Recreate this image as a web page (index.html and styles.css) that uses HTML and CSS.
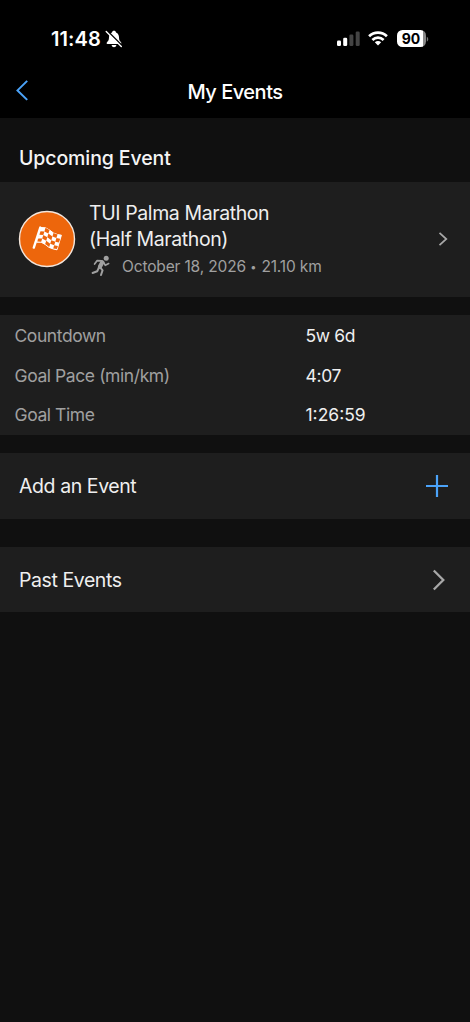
FILE: index.html
```html
<!DOCTYPE html>
<html lang="en">
<head>
<meta charset="utf-8">
<title>My Events</title>
<link rel="stylesheet" href="styles.css">
</head>
<body>
<header class="top">
  <div class="status">
    <span class="clock">11:48</span>
    <svg class="bell" width="18" height="18" viewBox="0 0 18 18">
      <path d="M9 .8C7.9.8 7.1 1.500 7 2.400 4.800 3.200 4.100 5 4 7.200 3.900 10 3.500 10.600 2.200 12 1.200 13.200 1.500 14 2.600 14H15.400C16.500 14 16.800 13.200 15.800 12 14.500 10.600 14.100 10 14 7.200 13.900 5 13.200 3.200 11 2.400 10.900 1.500 10.100.8 9 .8ZM6.600 15H11.400C11.100 16.500 10.200 17.200 9 17.200S6.900 16.500 6.600 15Z" fill="#fff"/>
      <path d="M2.200.8 17.300 15.900" stroke="#000" stroke-width="1.600"/>
      <path d="M1.200 1.500 16.300 16.600" stroke="#fff" stroke-width="1.400" stroke-linecap="round"/>
    </svg>
    <svg class="signal" width="24" height="16" viewBox="0 0 24 16">
      <g fill="#fff"><rect x="0" y="9.500" width="4" height="5.500" rx="1.300"/><rect x="6.200" y="6.800" width="4" height="8.200" rx="1.300"/></g>
      <g fill="#444"><rect x="12.400" y="3.500" width="4" height="11.500" rx="1.300"/><rect x="18.700" y=".5" width="4" height="14.500" rx="1.300"/></g>
    </svg>
    <svg class="wifi" width="20" height="15" viewBox="0 0 20 15">
      <g fill="none" stroke="#fff" stroke-width="2.700"><path d="M1.100 5.300C6.100.4 13.900.4 18.900 5.300"/><path d="M4.400 8.900C7.600 5.900 12.400 5.900 15.600 8.900"/></g>
      <path d="M6.800 11.300C8.600 9.700 11.400 9.700 13.200 11.300L10 14.600Z" fill="#fff"/>
    </svg>
    <div class="battery"><span class="level">90</span></div>
    <svg width="3" height="16" viewBox="0 0 3 16"><path d="M.8 5.700C2.700 6.400 2.700 9.800.8 10.500Z" fill="#777"/></svg>
  </div>
  <nav class="nav">
    <svg class="back" width="14" height="22" viewBox="0 0 14 22"><path d="M12.200 1.900 2.500 11.400l9.700 9.500" fill="none" stroke="#4ba3f9" stroke-width="2"/></svg>
    <h1 class="title">My Events</h1>
  </nav>
</header>
<main>
  <h2 class="heading">Upcoming Event</h2>
  <section class="panel event">
    <svg class="badge" width="58" height="58" viewBox="0 0 58 58">
      <circle cx="29" cy="29" r="27.500" fill="#ed660c" stroke="#f3e6dc" stroke-width="1.400"/>
      <g transform="translate(-.5 0)">
        <path d="M23.300 17.500 28 17.800 32 20 36 23 40 24.500 43.900 25.200 39.500 39.800 35.600 38.900 31.600 37.400 27.600 34.400 23.600 32.200 19 32.200" fill="#fff" stroke="#fff" stroke-width="1"/>
        <path d="M22.800 17.600 16.300 37.600" stroke="#fff" stroke-width="2.400" stroke-linecap="round"/>
        <g fill="#ed660c">
          <path d="M28 17.800l4 2.200-1.100 3.600-4-2.200Z"/>
          <path d="M36 23l4 1.500-1.100 3.600-4-1.500Z"/>
          <path d="M23 21.200l3.900.2-1.100 3.600-3.900-.2Z"/>
          <path d="M30.900 23.600l4 3-1.100 3.600-4-3Z"/>
          <path d="M38.900 28.100l3.700.7-1.100 3.600-3.700-.7Z"/>
          <path d="M25.800 25l4 2.200-1.100 3.600-4-2.200Z"/>
          <path d="M33.800 30.200l4 1.500-1.100 3.600-4-1.500Z"/>
          <path d="M20.800 28.400l3.900.2-1 3.100-3.900-.2Z"/>
          <path d="M28.700 30.800l4 3-1 3.100-4-3Z"/>
          <path d="M36.700 35.300l3.700.7-1 3.100-3.700-.7Z"/>
        </g>
      </g>
    </svg>
    <div class="info">
      <div class="name name-top">TUI Palma Marathon</div>
      <div class="name name-sub">(Half Marathon)</div>
      <div class="meta">
        <svg class="runner" width="21" height="22" viewBox="0 0 21 22">
          <circle cx="17.200" cy="3.300" r="2.500" fill="#a0a0a0"/>
          <g fill="none" stroke="#a0a0a0" stroke-linecap="round" stroke-linejoin="round">
            <path d="M13.300 7.300 10.900 11.800" stroke-width="4.200"/>
            <path d="M12.700 5.900 8 5.700 5.600 9" stroke-width="1.700"/>
            <path d="M14.700 7.500 16.300 10.300 19.700 8.500" stroke-width="1.600"/>
            <path d="M10 12.500 8.200 16.200 3.600 18" stroke-width="2"/>
            <path d="M11.200 12.300 13.600 15.300 12 20" stroke-width="2"/>
          </g>
        </svg>
        <span class="date">October 18, 2026 <span class="dot">•</span> 21.10 km</span>
      </div>
    </div>
    <svg class="go" width="10" height="14" viewBox="0 0 10 14"><path d="M1.500.9 8.300 7 1.500 13.100" fill="none" stroke="#a8a8a8" stroke-width="1.700"/></svg>
  </section>
  <dl class="panel stats">
    <dt>Countdown</dt><dd class="short">5w 6d</dd>
    <dt>Goal Pace (min/km)</dt><dd class="short">4:07</dd>
    <dt>Goal Time</dt><dd>1:26:59</dd>
  </dl>
  <section class="panel row add">
    <span>Add an Event</span>
    <svg width="22" height="22" viewBox="0 0 22 22"><path d="M11 0V22M0 11H22" stroke="#4ba3f9" stroke-width="2.200"/></svg>
  </section>
  <section class="panel row past">
    <span>Past Events</span>
    <svg class="more" width="14" height="22" viewBox="0 0 14 22"><path d="M1.800 1.500 11.300 11 1.800 20.500" fill="none" stroke="#a8a8a8" stroke-width="2.300"/></svg>
  </section>
</main>
</body>
</html>
```
FILE: styles.css
```css
* { box-sizing: border-box; }
body {
  margin: 0;
  min-height: 1022px;
  background: #101010;
  color: #efefef;
  font-family: Inter, "Liberation Sans", sans-serif;
  font-size: 19.500px;
}
svg { display: block; flex: none; }
h1, h2, dl, dd { margin: 0; }
.top { height: 118px; background: #000; }
.status {
  height: 66px;
  padding: 11px 41px 0 51px;
  display: flex;
  align-items: center;
  color: #fff;
}
.clock { width: 54px; font-size: 20px; font-weight: 600; letter-spacing: .1px; white-space: nowrap; }
.signal { margin: 0 7px 0 auto; }
.wifi { margin-right: 9px; }
.battery {
  width: 29px;
  height: 17px;
  border-radius: 5.500px;
  background: linear-gradient(90deg, #fff 90%, #888 90%);
}
.level {
  display: block;
  color: #000;
  font-size: 14px;
  font-weight: 700;
  line-height: 17px;
  text-align: center;
  transform: translateX(-.5px);
}
.nav {
  height: 52px;
  padding: 0 15px;
  display: grid;
  grid-template-columns: 14px 1fr 14px;
  align-items: center;
}
.back { margin-top: -5px; }
.title { font-size: 20px; font-weight: 550; text-align: center; letter-spacing: -.5px; color: #fff; }
.heading {
  height: 64px;
  padding: 16px 19px 0;
  line-height: 48px;
  font-size: 19.500px;
  font-weight: 550;
  letter-spacing: -.1px;
  color: #f5f5f5;
}
.panel { background: #1e1e1e; }
.event {
  height: 115px;
  padding: 0 22px 2px 18px;
  display: flex;
  align-items: center;
}
.info { margin: 3px 0 0 13px; flex: 1; white-space: nowrap; }
.name { line-height: 26px; letter-spacing: -.4px; }
.meta { display: flex; align-items: center; height: 29px; color: #a0a0a0; }
.runner { margin: 0 12px 0 0; }
.date { font-size: 15.500px; letter-spacing: -.15px; }
.dot { font-size: 11px; vertical-align: 1px; margin: 0 1px 0 0; }
.stats {
  height: 120px;
  margin-top: 18px;
  padding-left: 14.500px;
  display: grid;
  grid-template-columns: 291px 1fr;
  grid-template-rows: 40px 40px 39px;
  align-items: center;
  font-size: 17.500px;
}
.stats dt { color: #a0a0a0; letter-spacing: -.42px; }
.short { letter-spacing: -.35px; }
.row {
  height: 65px;
  padding: 0 22px 0 19px;
  display: flex;
  align-items: center;
  justify-content: space-between;
  letter-spacing: -.42px;
}
.add { height: 66px; margin-top: 18px; }
.past { margin-top: 28px; }
.more { margin-right: 2px; }
```
